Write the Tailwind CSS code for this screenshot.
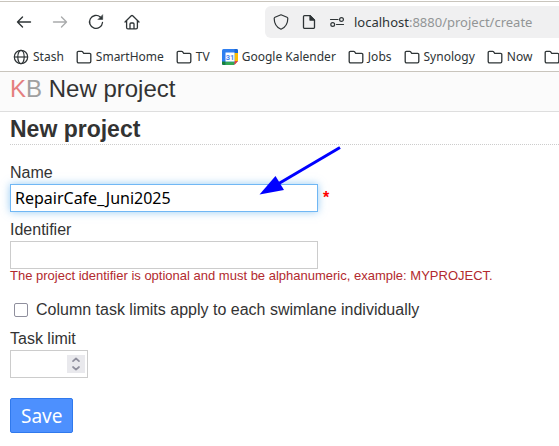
<!DOCTYPE html>
<html lang="en">
<head>
<meta charset="utf-8">
<title>New project</title>
<script src="https://cdn.jsdelivr.net/npm/@tailwindcss/browser@4"></script>
</head>
<body class="min-h-screen overflow-hidden bg-white font-['Liberation_Sans',Arial,sans-serif] text-base leading-5 text-[#333]">
<svg class="hidden">
  <symbol id="folder" viewBox="0 0 16 16"><path d="M1.200 12.500V3.500a1.200 1.200 0 0 1 1.200-1.200h3.300a1 1 0 0 1 .8.400l1.200 1.600h5.900a1.200 1.200 0 0 1 1.200 1.200v7a1.300 1.300 0 0 1-1.300 1.300H2.500A1.300 1.300 0 0 1 1.200 12.500Z" fill="none" stroke="currentColor" stroke-width="1.300"/></symbol>
</svg>
<div class="border-b border-[#c9c5bd] bg-white pt-px font-['Noto_Sans',sans-serif] text-[#2e3436]">
  <nav class="flex h-[41px] items-center border-t border-[#c9c5bd]" aria-label="Navigation">
    <div class="flex shrink-0 gap-5 pl-4">
      <button aria-label="Back" class="size-4"><svg viewBox="0 0 16 16" class="size-4" fill="none" stroke="currentColor" stroke-width="1.400" stroke-linecap="round" stroke-linejoin="round"><path d="M14.500 8H1.500M6.500 3l-5 5 5 5"/></svg></button>
      <button aria-label="Forward" class="size-4 text-[#a9abac]"><svg viewBox="0 0 16 16" class="size-4" fill="none" stroke="currentColor" stroke-width="1.400" stroke-linecap="round" stroke-linejoin="round"><path d="M1.500 8h13M9.500 3l5 5-5 5"/></svg></button>
      <button aria-label="Reload" class="size-4"><svg viewBox="0 0 16 16" class="size-4" fill="none" stroke="currentColor" stroke-width="1.300" stroke-linecap="round"><path d="M12.300 3A6.500 6.500 0 1 0 14.500 8.500"/><path d="M14.700 1v4.500h-4.500z" fill="currentColor" stroke-width=".5" stroke-linejoin="round"/></svg></button>
      <button aria-label="Home" class="size-4"><svg viewBox="0 0 16 16" class="size-4" fill="none" stroke="currentColor" stroke-width="1.300" stroke-linecap="round" stroke-linejoin="round"><path d="M1 8l6.300-6.200a1 1 0 0 1 1.400 0L15 8M2.600 6.800v6.700a1.300 1.300 0 0 0 1.300 1.300h8.200a1.300 1.300 0 0 0 1.300-1.300V6.800M6 14.500V10a1 1 0 0 1 1-1h2a1 1 0 0 1 1 1v4.500"/></svg></button>
    </div>
    <div class="ml-[125px] flex h-8 flex-1 items-center rounded-l-md bg-[#f0f0f1] pl-2">
      <svg viewBox="0 0 16 16" class="size-4 shrink-0" fill="none" stroke="currentColor" stroke-width="1.200" stroke-linejoin="round"><path d="M8 .8l6 2.500c.5.200.8.600.8 1.100 0 4.600-1.800 8.600-6.800 10.800C3 13 1.200 9 1.200 4.400c0-.5.300-.9.800-1.100Z"/></svg>
      <svg viewBox="0 0 16 16" class="ml-3 size-4 shrink-0" fill="none" stroke="currentColor" stroke-width="1.300" stroke-linejoin="round"><path d="M3.500 1.600H9l4.500 4.500v7.100a1.200 1.200 0 0 1-1.200 1.200H3.700a1.200 1.200 0 0 1-1.200-1.200V2.600a1 1 0 0 1 1-1Z"/><path d="M9 1.600v4.500h4.500z" fill="currentColor"/></svg>
      <svg viewBox="0 0 16 16" class="ml-3 size-4 shrink-0" fill="none" stroke="currentColor" stroke-width="1.200" stroke-linecap="round"><path d="M1.500 5.500h7.500M7.500 10.500h7"/><circle cx="12.500" cy="5.500" r="1.900"/><circle cx="3.700" cy="10.500" r="1.900"/></svg>
      <span class="ml-[9px] text-[13px] whitespace-nowrap">localhost<span class="text-[#929596]">:8880/project/create</span></span>
    </div>
  </nav>
  <div class="flex h-[29px] items-center gap-3 pl-[13px] text-[12px] whitespace-nowrap">
    <a href="#" class="flex shrink-0 items-center gap-1"><svg viewBox="0 0 16 16" class="size-4" fill="none" stroke="currentColor" stroke-width="1.200"><circle cx="8" cy="8" r="6.700"/><ellipse cx="8" cy="8" rx="3.200" ry="6.700"/><path d="M1.500 8h13"/></svg>Stash</a>
    <a href="#" class="flex shrink-0 items-center gap-1"><svg class="size-4"><use href="#folder"/></svg>SmartHome</a>
    <a href="#" class="flex shrink-0 items-center gap-1"><svg class="size-4"><use href="#folder"/></svg>TV</a>
    <a href="#" class="flex shrink-0 items-center gap-1"><svg viewBox="0 0 16 16" class="size-4 font-['Roboto',sans-serif]"><rect width="16" height="16" rx="1.500" fill="#2f7ff0"/><path d="M12.500 4H16v8h-3.500z" fill="#fbbc04"/><path d="M12.500 0h2A1.500 1.500 0 0 1 16 1.500V4h-3.500z" fill="#1967d2"/><path d="M3.500 12.500h9V16h-9z" fill="#34a853"/><path d="M0 12.500h3.500V16h-2A1.500 1.500 0 0 1 0 14.500z" fill="#188038"/><path d="M16 12v4h-4z" fill="#fff"/><path d="M12.500 12H16l-3.500 4z" fill="#ea4335"/><path d="M3.500 3.500h9v9h-9z" fill="#fff"/><text x="8" y="10.700" text-anchor="middle" font-size="7.500" font-weight="bold" fill="#4285f4">31</text></svg>Google Kalender</a>
    <a href="#" class="flex shrink-0 items-center gap-1"><svg class="size-4"><use href="#folder"/></svg>Jobs</a>
    <a href="#" class="flex shrink-0 items-center gap-1"><svg class="size-4"><use href="#folder"/></svg>Synology</a>
    <a href="#" class="flex shrink-0 items-center gap-1"><svg class="size-4"><use href="#folder"/></svg>Now</a>
    <a href="#" aria-label="More bookmarks" class="flex shrink-0"><svg class="size-4"><use href="#folder"/></svg></a>
  </div>
</div>
<header class="border-b border-[#dedede] bg-[#fbfbfb] px-[10px] pt-[3px] pb-2">
  <h1 class="text-2xl leading-7"><a href="#" class="text-[#a0a0a0]"><span class="text-[#e57f7f]">K</span>B</a> New project</h1>
</header>
<main class="relative pl-[10px]">
  <div class="border-b border-dotted border-[#ccc] pt-1 pb-[2px]"><h2 class="text-[23px] leading-[26px] font-bold">New project</h2></div>
  <form class="flex flex-col items-start pt-[18px]">
    <label for="name">Name</label>
    <div class="mt-px flex items-center gap-[5px]">
      <input id="name" value="RepairCafe_Juni2025" class="h-7 w-[308px] border border-[#70b7f4] bg-white px-1 font-['Noto_Sans',sans-serif] text-base text-black shadow-[0_0_8px_rgba(82,168,236,0.6)] outline-none">
      <span class="font-bold text-[#f00]">*</span>
    </div>
    <label for="identifier" class="mt-2">Identifier</label>
    <input id="identifier" class="mt-px h-7 w-[308px] border border-[#ccc] bg-white px-1 font-['Noto_Sans',sans-serif]">
    <p class="text-[13px] leading-[14px] text-[#b22a2e]">The project identifier is optional and must be alphanumeric, example: MYPROJECT.</p>
    <label class="mt-[17px] ml-1 flex items-center gap-2"><input type="checkbox" class="size-[14px] appearance-none rounded-[2px] border border-[#8f8f9d] bg-white">Column task limits apply to each swimlane individually</label>
    <label for="limit" class="mt-[9px]">Task limit</label>
    <div class="mt-px flex h-7 w-[78px] items-center border border-[#ccc] pr-[2px] pl-1">
      <input id="limit" type="number" class="w-0 flex-1 appearance-none [appearance:textfield] font-['Noto_Sans',sans-serif] outline-none">
      <svg viewBox="0 0 18 18" class="size-[18px] bg-[#e9e9ed]" fill="none" stroke="#8f8f9d" stroke-width="1.700" stroke-linecap="round" stroke-linejoin="round"><path d="M6 6.200l3-2.700 3 2.700M6 12l3 2.700 3-2.700"/></svg>
    </div>
    <button type="button" class="mt-5 h-[35px] rounded-[2px] border border-[#3079ed] bg-[#4d90fe] px-[10px] font-['Noto_Sans',sans-serif] text-[19px] text-white">Save</button>
  </form>
  <svg class="pointer-events-none absolute top-[34px] left-[258px] h-[52px] w-[84px]" viewBox="0 0 84 52" aria-hidden="true"><path d="M82 1.500L20 38" stroke="#00f" stroke-width="3"/><path d="M1.500 48.500L17.500 30l8.500 14z" fill="#00f"/></svg>
</main>
</body>
</html>
